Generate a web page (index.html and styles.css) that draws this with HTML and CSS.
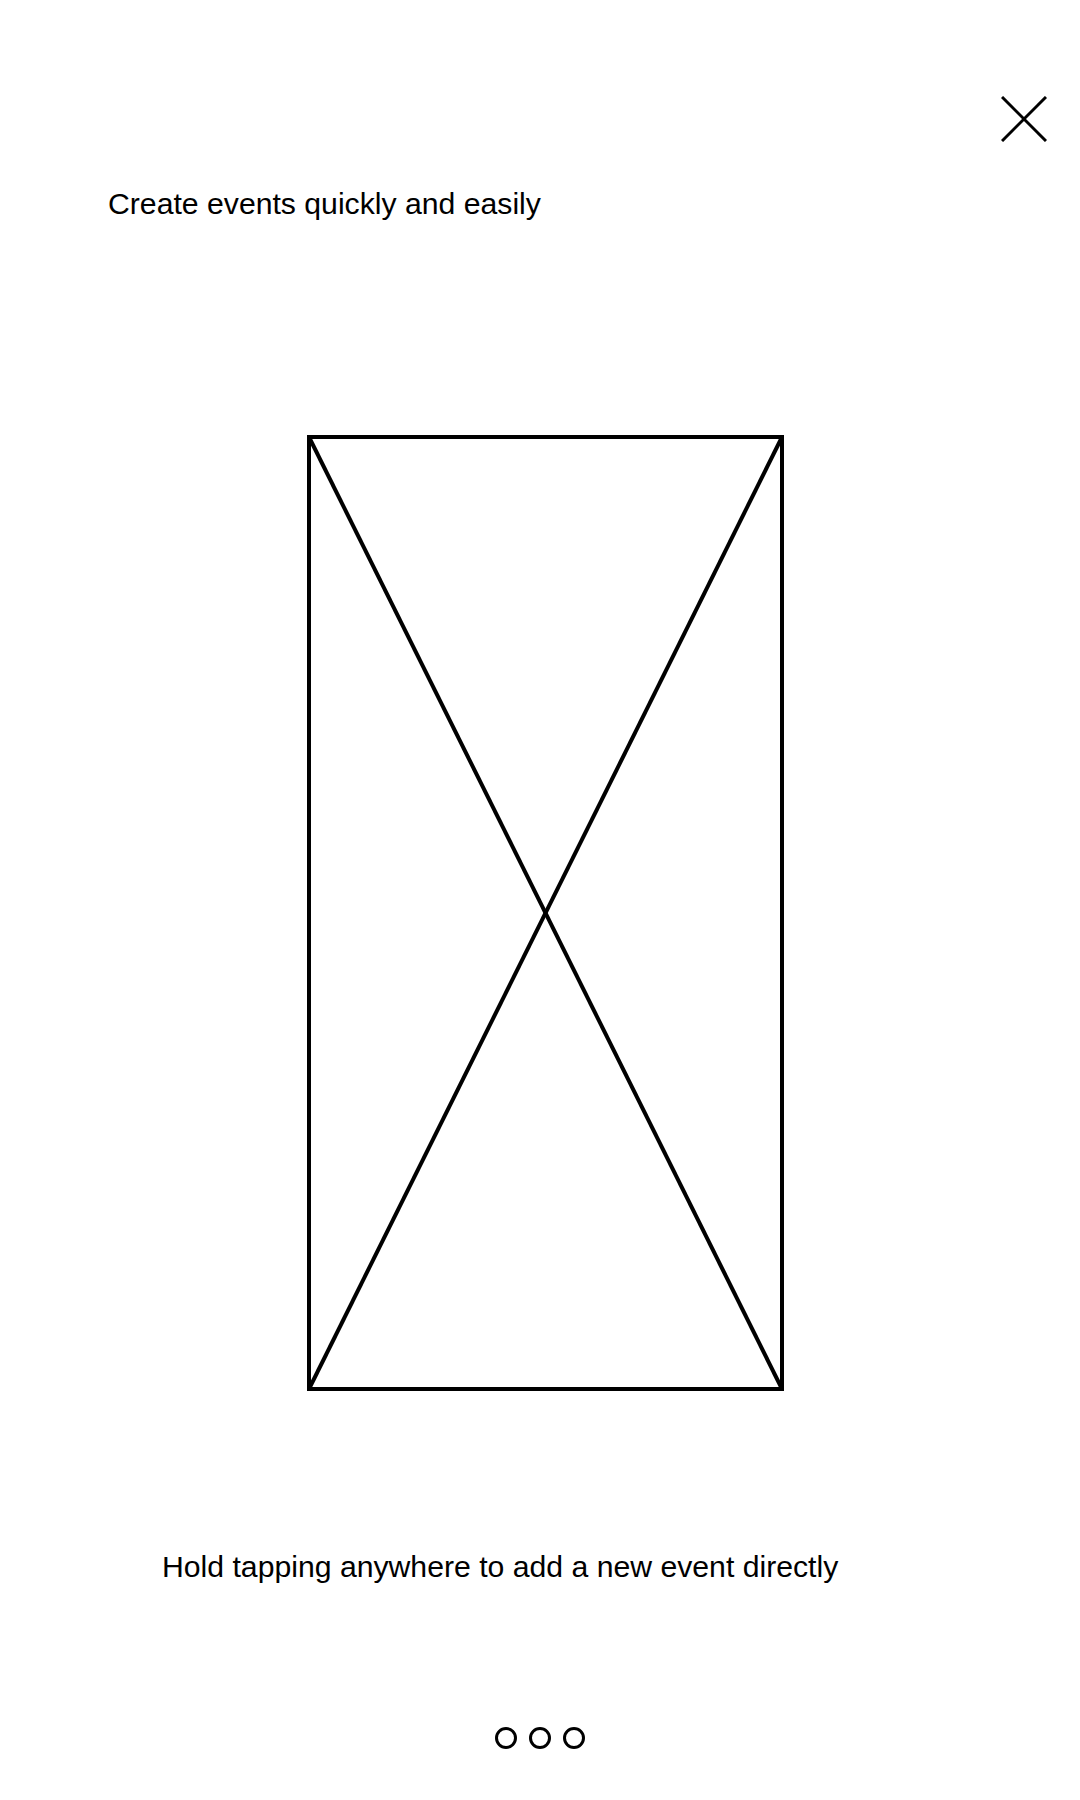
FILE: index.html
```html
<!DOCTYPE html>
<html>
<head>
<meta charset="utf-8">
<link rel="stylesheet" href="styles.css">
</head>
<body>
<div class="screen">
  <div class="topbar">
    <svg class="close" width="46" height="46" viewBox="0 0 46 46">
      <line x1="1" y1="1" x2="45" y2="45" stroke="#000" stroke-width="3"/>
      <line x1="45" y1="1" x2="1" y2="45" stroke="#000" stroke-width="3"/>
    </svg>
  </div>
  <h1 class="title">Create events quickly and easily</h1>
  <div class="media">
    <svg width="477" height="956" viewBox="0 0 477 956">
      <rect x="2" y="2" width="473" height="952" fill="none" stroke="#000" stroke-width="4"/>
      <line x1="2" y1="2" x2="475" y2="954" stroke="#000" stroke-width="4"/>
      <line x1="475" y1="2" x2="2" y2="954" stroke="#000" stroke-width="4"/>
    </svg>
  </div>
  <p class="hint">Hold tapping anywhere to add a new event directly</p>
  <div class="dots">
    <span class="dot"></span><span class="dot"></span><span class="dot"></span>
  </div>
</div>
</body>
</html>
```
FILE: styles.css
```css
html, body {
  margin: 0;
  padding: 0;
  background: #fff;
}
.screen {
  width: 1080px;
  height: 1800px;
  font-family: "Liberation Sans", Arial, sans-serif;
  color: #000;
}
.topbar {
  display: flex;
  justify-content: flex-end;
  padding: 96px 33px 0 0;
}
.close {
  display: block;
}
.title {
  margin: 47px 0 0 108px;
  font-size: 30.2px;
  font-weight: normal;
  line-height: 30px;
}
.media {
  margin: 216px 0 0 307px;
}
.media svg {
  display: block;
}
.hint {
  margin: 161px 0 0 162px;
  font-size: 30.2px;
  line-height: 30px;
}
.dots {
  display: flex;
  justify-content: center;
  gap: 12px;
  margin-top: 145px;
}
.dot {
  width: 22px;
  height: 22px;
  box-sizing: border-box;
  border: 3px solid #000;
  border-radius: 50%;
}
```
